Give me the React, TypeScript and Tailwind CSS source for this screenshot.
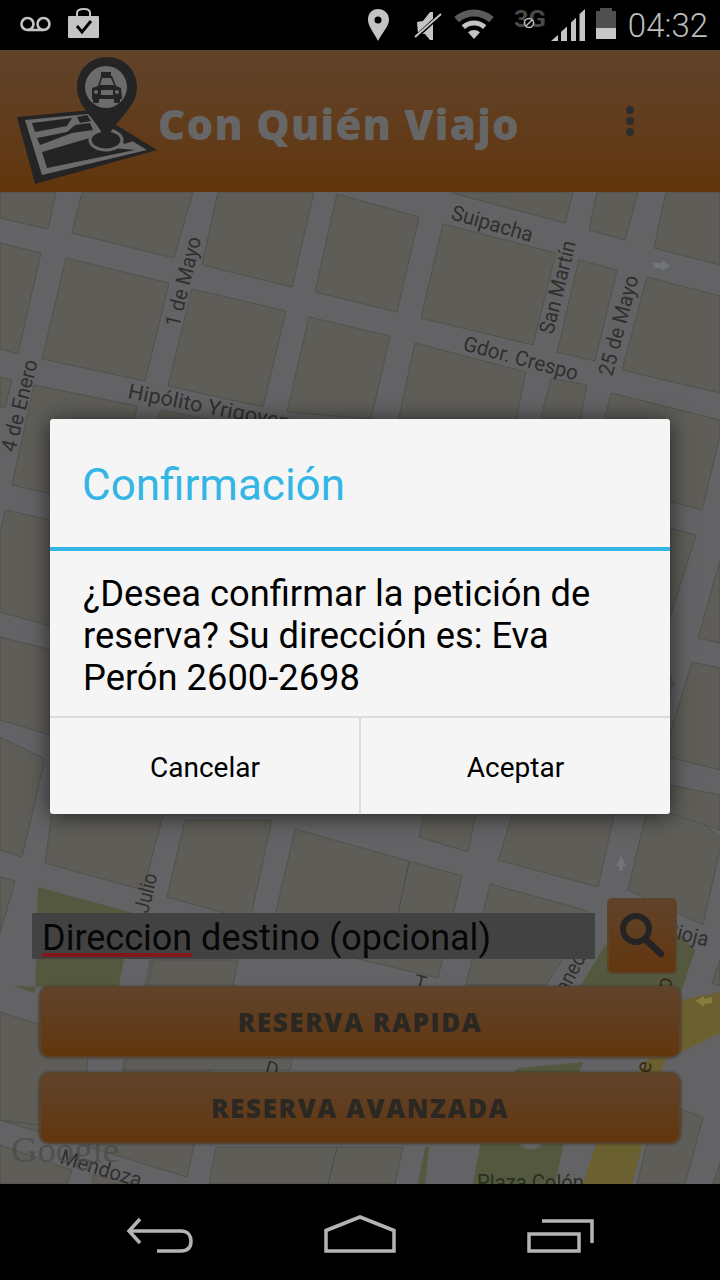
const BLOCKS = [
  "82,192 72,233 174,258 193,192",
  "66,258 169,283 145,381 42,359",
  "192,289 286,311 263,407 168,386",
  "202,265 292,287 314,192 218,192",
  "337,194 419,217 397,312 315,292",
  "443,224 556,253 533,345 421,318",
  "309,317 390,336 371,419 287,412",
  "415,343 526,372 514,430 396,430",
  "579,260 617,270 595,361 557,352",
  "647,277 720,296 720,393 622,370",
  "666,192 654,248 720,265 720,192",
  "597,192 589,230 625,240 638,192",
  "452,193 565,223 573,192",
  "0,192 0,218 48,229 56,192",
  "0,243 41,253 18,354 0,349",
  "34,385 137,406 120,510 12,485",
  "0,377 12,380 5,407 0,407",
  "161,410 270,432 150,432",
  "611,393 720,420 720,436 702,510 590,480",
  "551,378 587,385 578,430 538,430",
  "5,510 120,535 100,640 0,612 0,533",
  "0,637 60,652 50,735 0,720",
  "0,737 45,759 22,857 0,850",
  "60,760 45,863 143,890 170,790",
  "0,877 15,881 0,933",
  "167,897 250,920 272,820 185,820",
  "295,829 462,876 438,978 270,938",
  "419,837 468,852 477,810 425,810",
  "498,860 598,887 615,810 514,810",
  "490,884 588,911 575,940 546,985 466,985",
  "628,890 703,925 722,840 660,783 647,810",
  "670,528 696,535 670,617",
  "698,638 720,643 720,560",
  "692,662 720,668 720,770 660,755 668,740",
  "660,783 720,795 720,830 660,810",
  "720,960 712,983 720,986",
  "150,960 238,960 232,990 145,990",
  "0,1012 90,1040 80,1130 0,1120",
  "0,1120 187,1177 215,1050 125,1050 115,1135",
  "0,1145 72,1170 67,1184 0,1184",
  "93,1175 137,1184 93,1184",
  "216,1147 209,1184 395,1184 403,1147",
  "647,1143 680,1108 703,1118 685,1184 637,1184",
  "720,1163 713,1184 720,1184",
  "294,1050 130,1050 124,1070 290,1070",
]

const LABELS = [
  { text: "Suipacha", x: 450, y: 219, angle: 16, length: 84 },
  { text: "1 de Mayo", x: 179, y: 328, angle: -76, length: 92 },
  { text: "San Martín", x: 553, y: 335, angle: -76, length: 95 },
  { text: "25 de Mayo", x: 612, y: 377, angle: -75, length: 103 },
  { text: "Gdor. Crespo", x: 462, y: 350, angle: 15, length: 118 },
  { text: "Hipólito Yrigoyen", x: 127, y: 398, angle: 11, length: 165 },
  { text: "4 de Enero", x: 15, y: 453, angle: -76, length: 94 },
  { text: "Julio", x: 148, y: 914, angle: -76, length: 40 },
  { text: "Rioja", x: 664, y: 936, angle: 14, length: 44 },
  { text: "Avellaneda", x: 548, y: 1030, angle: -62, length: 92 },
  { text: "Mendoza", x: 59, y: 1163, angle: 17, length: 84 },
]

function MapLayer() {
  return (
    <svg className="absolute inset-0 h-full w-full" viewBox="0 192 720 992">
      <rect x="0" y="192" width="720" height="992" fill="#636365" />
      {BLOCKS.map((points) => (
        <polygon key={points} points={points} fill="#5e5d58" stroke="#52514d" strokeWidth="1" />
      ))}
      <path d="M328 1184 L337 1147 M398 914 L409 862" stroke="#4a4a47" strokeWidth="1" fill="none" />
      <polygon points="38,887 133,913 118,990 13,986 35,993" fill="#53583f" />
      <polygon points="605,945 680,935 695,950 680,995 575,995" fill="#53583f" />
      <polygon points="519,1068 583,1062 578,1075 555,1184 473,1184 490,1090" fill="#53583f" />
      <polygon points="429,1147 425,1184 418,1184 425,1147" fill="#53583f" />
      <polygon points="720,992 683,1000 595,1147 583,1184 632,1184 665,1060 720,1033" fill="#6b6030" />
      <polygon points="150,960 155,960 148,990 143,990" fill="#585855" />
      <circle cx="531" cy="1135" r="14" fill="#676866" stroke="#5e5f5b" strokeWidth="2" />
      <path d="M653 263 L662 263 L662 260 L670 266 L662 271 L662 268 L655 268 Z" fill="#6f7579" />
      <path d="M621 855 L626 866 L623 866 L623 871 L619 871 L619 866 L616 866 Z" fill="#6f7579" />
      <path d="M668 671 L676 686 L671 686 L671 698 L668 698 Z" fill="#55585c" />
      <path d="M695 1001 L704 996 L704 999 L712 997 L712 1003 L704 1004 L704 1007 Z" fill="#857c3f" />
      <g fontFamily="Roboto, sans-serif" fontSize="21" fill="#2f2f2d">
        {LABELS.map((label) => (
          <text
            key={label.text}
            x={label.x}
            y={label.y}
            textLength={label.length}
            lengthAdjust="spacingAndGlyphs"
            transform={`rotate(${label.angle} ${label.x} ${label.y})`}
          >
            {label.text}
          </text>
        ))}
        <text x="658" y="988" fontSize="22" fill="#3d2a12" transform="rotate(-75 666 982)">o</text>
        <text x="640" y="1074" fontSize="22" fill="#3d2a12" transform="rotate(-80 645 1068)">e</text>
        <text x="413" y="988" fontSize="20" transform="rotate(14 413 988)">T</text>
        <text x="264" y="1074" fontSize="20" transform="rotate(14 264 1074)">D</text>
        <text x="477" y="1190" fontSize="22" fill="#27301f" textLength="107" lengthAdjust="spacingAndGlyphs">Plaza Colón</text>
      </g>
      <text x="11" y="1162" fontFamily="'Liberation Serif', serif" fontSize="36" fill="#4c4c4c" opacity="0.8" textLength="108" lengthAdjust="spacingAndGlyphs">Google</text>
    </svg>
  )
}

function Logo() {
  return (
    <svg width="148" height="142" viewBox="10 50 148 142" className="shrink-0">
      <polygon points="17,117 92,110 157,150 35,184" fill="#242424" />
      <polygon points="25,120 88,114 147,150 42,175" fill="#6b6b6b" />
      <g fill="#242424">
        <polygon points="32,123 72,118 67,126 35,132" />
        <polygon points="77,117 87,115 91,121 80,123" />
        <polygon points="37,138 67,132 75,125 90,123 93,130 72,133 40,145" />
        <polygon points="42,152 93,137 98,148 114,148 135,150 47,168" />
        <polygon points="117,132 124,130 134,141 124,144" />
      </g>
      <ellipse cx="106" cy="140" rx="16" ry="10" fill="#242424" stroke="#6b6b6b" strokeWidth="3" />
      <path d="M107 57 C124 57 137 70 137 87 C137 106 120 116 106 139 C93 116 77 106 77 87 C77 70 90 57 107 57 Z" fill="#242424" />
      <circle cx="106" cy="87" r="21" fill="#6b6b6b" />
      <g fill="#242424">
        <rect x="101" y="72" width="10" height="4" />
        <path d="M98 86 L101 76 L112 76 L116 86 L121 88 L122 99 L92 99 L92 88 Z" />
        <rect x="93" y="98" width="6" height="5" rx="1" />
        <rect x="114" y="98" width="6" height="5" rx="1" />
      </g>
      <polygon points="100,85 102,78 111,78 114,85" fill="#6b6b6b" />
      <rect x="101" y="90" width="12" height="5" fill="#6b6b6b" />
      <circle cx="96" cy="92" r="2" fill="#6b6b6b" />
      <circle cx="117" cy="92" r="2" fill="#6b6b6b" />
    </svg>
  )
}

function StatusBar() {
  return (
    <div className="flex h-[50px] shrink-0 items-center bg-black pl-[16px] pr-[12px] text-[#bdbdbd]">
      <svg width="40" height="50" viewBox="16 0 40 50">
        <circle cx="27.5" cy="24" r="6" fill="none" stroke="#c4c4c4" strokeWidth="2.6" />
        <circle cx="43.5" cy="24" r="6" fill="none" stroke="#c4c4c4" strokeWidth="2.6" />
        <path d="M27.5 30 H43.5" stroke="#c4c4c4" strokeWidth="2.6" />
      </svg>
      <svg width="36" height="50" viewBox="66 0 36 50" className="ml-[10px]">
        <path d="M77 17 V13 C77 10 80 9 84 9 C88 9 90 10 90 13 V17" fill="none" stroke="#c4c4c4" strokeWidth="2" />
        <rect x="68" y="16" width="31" height="22" rx="1" fill="#c4c4c4" />
        <path d="M77 26 L82 32 L91 21" fill="none" stroke="#000" strokeWidth="3" />
      </svg>
      <svg width="26" height="50" viewBox="366 0 26 50" className="ml-auto">
        <path d="M378 9 C384 9 389 13 389 20 C389 26 382 33 378 41 C374 33 368 26 368 20 C368 13 372 9 378 9 Z" fill="#c4c4c4" />
        <circle cx="378" cy="20" r="3.5" fill="#000" />
      </svg>
      <svg width="32" height="50" viewBox="412 0 32 50" className="ml-[20px]">
        <path d="M417 22 L423 21 L430 12 L433 12 L433 40 L430 40 L425 34 L418 34 Z" fill="#c4c4c4" />
        <path d="M414 39 L441 14" stroke="#000" strokeWidth="4" />
        <path d="M415 37 L441 14" stroke="#c4c4c4" strokeWidth="2" />
      </svg>
      <svg width="44" height="50" viewBox="452 0 44 50" className="ml-[8px]">
        <path d="M456.6 19.7 A26 26 0 0 1 491.4 19.7" fill="none" stroke="#5b5b5b" strokeWidth="7" />
        <path d="M463.3 27.1 A16 16 0 0 1 484.7 27.1" fill="none" stroke="#c4c4c4" strokeWidth="5" />
        <path d="M474 39 L468 32.3 A9 9 0 0 1 480 32.3 Z" fill="#c4c4c4" />
      </svg>
      <svg width="34" height="50" viewBox="514 0 34 50" className="ml-[18px]">
        <text x="514" y="27" fontFamily="Roboto, sans-serif" fontWeight="700" fontSize="23" fill="#4a4a4a" textLength="32" lengthAdjust="spacingAndGlyphs">3G</text>
        <circle cx="529" cy="23" r="4.5" fill="#000" stroke="#bdbdbd" strokeWidth="1.5" />
        <path d="M526 26 L532 20" stroke="#bdbdbd" strokeWidth="1.5" />
      </svg>
      <svg width="37" height="50" viewBox="550 0 37 50" className="ml-[2px]">
        <g fill="#c4c4c4">
          <polygon points="551,41 558,35 558,41" />
          <polygon points="561,32 567,26.5 567,41 561,41" />
          <polygon points="571,22.5 576,17.7 576,41 571,41" />
          <polygon points="579.5,14 585,9 585,41 579.5,41" />
        </g>
      </svg>
      <svg width="24" height="50" viewBox="594 0 24 50" className="ml-[7px]">
        <path d="M596 11 H600 V8 H612 V11 H616 V28 H596 Z" fill="#505050" />
        <rect x="596" y="28" width="20" height="11" fill="#c8c8c8" />
      </svg>
      <span className="ml-[10px] font-['Roboto',sans-serif] text-[33px] font-light leading-none">04:32</span>
    </div>
  )
}

function ActionButton({ label }: { label: string }) {
  return (
    <button className="mx-[39px] flex h-[72px] items-center justify-center rounded-[10px] border-2 border-[#5a452c] bg-gradient-to-b from-[#60432a] to-[#62360c] font-['Open_Sans',sans-serif] text-[26px] font-extrabold tracking-[1.6px] text-[#2b2723] shadow-[0_0_3px_rgba(0,0,0,0.4)]">
      {label}
    </button>
  )
}

export default function App() {
  return (
    <div className="flex h-[1280px] w-[720px] flex-col overflow-hidden bg-black">
      <StatusBar />

      <header className="flex h-[142px] shrink-0 items-center bg-gradient-to-b from-[#60432a] to-[#62360c] pl-[10px] pr-[86px]">
        <Logo />
        <span className="pt-[4px] font-['Open_Sans',sans-serif] text-[42px] font-extrabold tracking-[1.3px] text-[#666666]">Con Quién Viajo</span>
        <div className="ml-auto flex flex-col gap-[3px]">
          <div className="h-[8px] w-[8px] rounded-full bg-[#2d2d2d]" />
          <div className="h-[8px] w-[8px] rounded-full bg-[#2d2d2d]" />
          <div className="h-[8px] w-[8px] rounded-full bg-[#2d2d2d]" />
        </div>
      </header>

      <main className="relative flex h-[992px] shrink-0 flex-col justify-end overflow-hidden pb-[40px]">
        <MapLayer />

        <div className="relative flex h-[76px] items-center gap-[12px] pl-[32px]">
          <div className="flex h-[46px] w-[563px] items-center bg-[#424242] pl-[10px] pt-[4px] font-['Roboto',sans-serif] text-[36px] text-[#060606]">
            <span className="underline decoration-[#7f1a1c] decoration-[4px] underline-offset-[3px] [text-decoration-skip-ink:none]">Direccion</span>
            <span>&nbsp;destino (opcional)</span>
          </div>
          <button className="flex h-[76px] w-[70px] items-center justify-center rounded-[5px] border-2 border-[#5a452c] bg-gradient-to-b from-[#60432a] to-[#62360c]">
            <svg width="48" height="50" viewBox="0 0 48 50" fill="none">
              <circle cx="18" cy="18" r="13" stroke="#242424" strokeWidth="6" />
              <path d="M28 29 L43 43" stroke="#242424" strokeWidth="6.5" strokeLinecap="round" />
            </svg>
          </button>
        </div>

        <div className="relative mt-[12px] flex flex-col gap-[14px]">
          <ActionButton label="RESERVA RAPIDA" />
          <ActionButton label="RESERVA AVANZADA" />
        </div>

        <div className="absolute left-[50px] top-[227px] flex h-[395px] w-[620px] flex-col rounded-[3px] bg-[#f5f5f5] font-['Roboto',sans-serif] shadow-[0_2px_22px_rgba(0,0,0,0.65)]">
          <div className="flex h-[128px] items-center px-[32px] pt-[4px] text-[44px] text-[#33b5e5]">Confirmación</div>
          <div className="h-[4px] bg-[#33b5e5]" />
          <div className="flex h-[165px] items-center px-[33px] pt-[4px] text-[36.3px] leading-[42px] text-black">
            ¿Desea confirmar la petición de reserva? Su dirección es: Eva Perón 2600-2698
          </div>
          <div className="grid flex-1 grid-cols-2 border-t-2 border-[#dcdcdc] text-[28px] text-black">
            <button className="pt-[4px]">Cancelar</button>
            <button className="-ml-[1px] border-l-2 border-[#dcdcdc] pt-[4px]">Aceptar</button>
          </div>
        </div>
      </main>

      <nav className="grid h-[96px] shrink-0 grid-cols-3 items-center bg-black px-[60px] pt-[6px]">
        <svg width="70" height="44" viewBox="125 1212 70 44" className="mx-auto" fill="none" stroke="#b4b4b4" strokeWidth="3.5">
          <path d="M140 1218 L129 1230 L140 1242 M129 1230 H181 C188 1230 191 1235 191 1240 C191 1246 188 1250 181 1250 H157" />
        </svg>
        <svg width="74" height="44" viewBox="323 1212 74 44" className="mx-auto" fill="none" stroke="#b4b4b4" strokeWidth="3.5">
          <path d="M326 1229.5 L360 1216 L394 1229.5 V1250 H326 Z" />
        </svg>
        <svg width="70" height="44" viewBox="527 1212 70 44" className="mx-auto" fill="none" stroke="#b4b4b4" strokeWidth="3.5">
          <path d="M531 1233 H581 V1250 H531 Z M544 1220 H594 V1242" />
        </svg>
      </nav>
    </div>
  )
}
